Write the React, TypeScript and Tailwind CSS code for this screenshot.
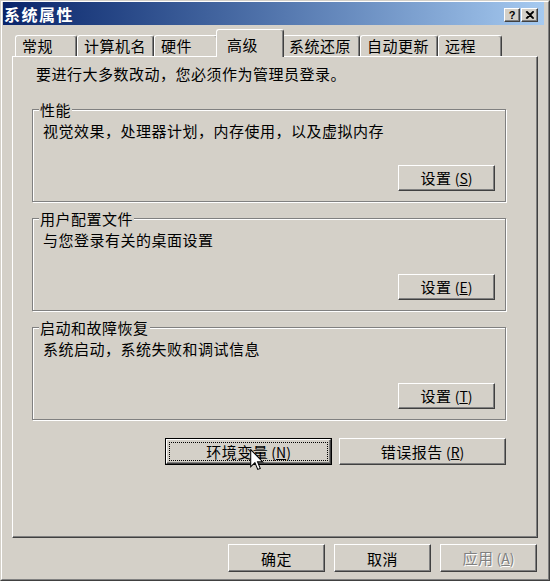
import React from "react";

const bevel =
  "bg-[#d4d0c8] border border-t-white border-l-white border-r-[#404040] border-b-[#404040] shadow-[inset_-1px_-1px_0_#808080]";

function Label({ text, k, disabled }: { text: string; k?: string; disabled?: boolean }) {
  return (
    <span
      className={
        "whitespace-nowrap text-[15px] leading-[17px] tracking-[0.5px] " +
        (disabled ? "text-[#808080] [text-shadow:1px_1px_0_#fff]" : "text-black")
      }
    >
      {text}
      {k ? (
        <span className="text-[14px] tracking-normal">
          {" ("}
          <span className="underline underline-offset-[1px]">{k}</span>
          {")"}
        </span>
      ) : null}
    </span>
  );
}

function Btn({
  className,
  text,
  k,
  disabled,
}: {
  className: string;
  text: string;
  k?: string;
  disabled?: boolean;
}) {
  return (
    <div className={"flex items-center justify-center " + bevel + " " + className}>
      <Label text={text} k={k} disabled={disabled} />
    </div>
  );
}

function FocusBtn({ className, text, k }: { className: string; text: string; k: string }) {
  return (
    <div className={"flex border border-black " + className}>
      <div className={"flex flex-1 " + bevel}>
        <div className="flex flex-1 items-center justify-center m-[2px] border border-dotted border-black">
          <Label text={text} k={k} />
        </div>
      </div>
    </div>
  );
}

function Group({ title, desc, k }: { title: string; desc: string; k: string }) {
  return (
    <div className="h-[93px] w-[474px] border border-[#808080] shadow-[inset_1px_1px_0_#fff,1px_1px_0_#fff] flex flex-col">
      <div className="-mt-[9px] ml-[6px] w-fit px-[1px] bg-[#d4d0c8] text-[15px] leading-[17px] tracking-[0.5px] whitespace-nowrap">
        {title}
      </div>
      <div className="mt-[4px] pl-[10px] text-[15px] leading-[17px] tracking-[0.5px] whitespace-nowrap">
        {desc}
      </div>
      <div className="mt-auto mb-[10px] mr-[10px] flex justify-end">
        <Btn className="w-[97px] h-[26px]" text="设置" k={k} />
      </div>
    </div>
  );
}

const tabBase =
  "border-l border-t border-r border-l-white border-t-white border-r-[#404040] shadow-[inset_-1px_0_0_#808080] rounded-t-[3px] text-[15px] leading-[17px] tracking-[0.5px] whitespace-nowrap bg-[#d4d0c8]";

function Tab({ label, className }: { label: string; className: string }) {
  return <div className={"h-[21px] pl-[6px] pt-[1px] " + tabBase + " " + className}>{label}</div>;
}

export default function App() {
  return (
    <div className="relative w-[550px] h-[581px] bg-[#d4d0c8] text-black font-['Noto_Sans_CJK_SC','Noto_Sans',sans-serif]">
      <div className="w-full h-full border border-t-[#d4d0c8] border-l-[#d4d0c8] border-r-[#404040] border-b-[#404040]">
        <div className="w-full h-full flex flex-col border border-t-white border-l-white border-r-[#808080] border-b-[#808080] pl-[1px] pr-[4px] pb-[1px]">
          {/* Title bar */}
          <div className="h-[23px] flex items-center justify-between bg-linear-to-r from-[#0a246a] to-[#a6caf0] pl-[1px] pr-[6px]">
            <span className="text-white font-bold text-[16px] leading-[18px] tracking-[1.5px]">系统属性</span>
            <div className="flex gap-[1px] mt-[3px]">
              <div className={"w-[16px] h-[14px] flex items-center justify-center " + bevel}>
                <span className="font-['Liberation_Sans',sans-serif] font-bold text-[11px] leading-[11px] text-black">?</span>
              </div>
              <div className={"w-[17px] h-[14px] flex items-center justify-center " + bevel}>
                <svg width="9" height="8" viewBox="0 0 9 8">
                  <path d="M1 0.5 L8 7.5 M2 0.5 L9 7.5 M8 0.5 L1 7.5 M9 0.5 L2 7.5" stroke="#000" strokeWidth="1.1" fill="none" />
                </svg>
              </div>
            </div>
          </div>

          {/* Tabs + panel */}
          <div className="mt-[4px] ml-[9px] w-[526px] flex flex-col">
            <div className="h-[27px] flex items-end pl-[3px]">
              <Tab label="常规" className="w-[62px]" />
              <Tab label="计算机名" className="w-[77px]" />
              <Tab label="硬件" className="w-[64px]" />
              <div className={"relative z-10 -mx-[2px] -mb-[1px] w-[68px] h-[28px] pl-[10px] pt-[6px] " + tabBase}>
                高级
              </div>
              <Tab label="系统还原" className="w-[78px]" />
              <Tab label="自动更新" className="w-[78px]" />
              <Tab label="远程" className="w-[64px]" />
            </div>
            <div className="h-[482px] border border-t-white border-l-white border-r-[#404040] border-b-[#404040] shadow-[inset_-1px_-1px_0_#808080] flex flex-col pl-[19px] pt-[8px]">
              <div className="pl-[4px] text-[15px] leading-[17px] tracking-[0.5px] whitespace-nowrap">
                要进行大多数改动，您必须作为管理员登录。
              </div>
              <div className="mt-[27px]">
                <Group title="性能" desc="视觉效果，处理器计划，内存使用，以及虚拟内存" k="S" />
              </div>
              <div className="mt-[16px]">
                <Group title="用户配置文件" desc="与您登录有关的桌面设置" k="E" />
              </div>
              <div className="mt-[16px]">
                <Group title="启动和故障恢复" desc="系统启动，系统失败和调试信息" k="T" />
              </div>
              <div className="mt-[18px] w-[474px] flex justify-end gap-[7px]">
                <FocusBtn className="w-[167px] h-[27px]" text="环境变量" k="N" />
                <Btn className="w-[167px] h-[27px]" text="错误报告" k="R" />
              </div>
            </div>
            <div className="mt-[6px] flex justify-end gap-[9px] pr-[1px]">
              <Btn className="w-[97px] h-[28px]" text="确定" />
              <Btn className="w-[97px] h-[28px]" text="取消" />
              <Btn className="w-[97px] h-[28px]" text="应用" k="A" disabled />
            </div>
          </div>
        </div>
      </div>

      {/* Mouse cursor */}
      <svg className="absolute left-[250px] top-[449px]" width="14" height="22" viewBox="0 0 13 21">
        <path
          d="M0.5 0.5 L0.5 17 L4.5 13 L7.2 19.5 L9.6 18.5 L7 12.3 L12 12.3 Z"
          fill="#fff"
          stroke="#000"
          strokeWidth="1"
          strokeLinejoin="miter"
        />
      </svg>
    </div>
  );
}
